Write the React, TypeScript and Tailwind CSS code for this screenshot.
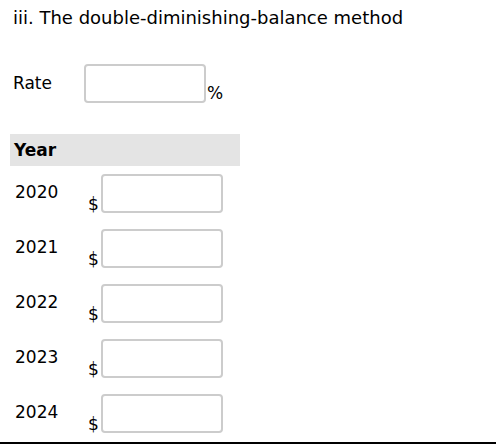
const years = [2020, 2021, 2022, 2023, 2024]

function AmountBox() {
  return (
    <input
      type="text"
      className="w-[122px] h-[39px] border-2 border-[#cccccc] rounded-[4px] bg-white outline-none"
    />
  )
}

export default function App() {
  return (
    <div className="w-[496px] h-[444px] bg-white text-black font-['DejaVu_Sans',Verdana,sans-serif] overflow-hidden flex flex-col">
      <div className="pl-[13px] pt-[8px] text-[18px] leading-[20px]">
        iii. The double-diminishing-balance method
      </div>

      {/* rate */}
      <div className="flex items-center mt-[36px] h-[39px]">
        <span className="pl-[13px] w-[84px] text-[17px] leading-[20px] mt-[-2px]">Rate</span>
        <div className="flex items-end">
          <AmountBox />
          <span className="text-[17px] leading-[17px] ml-[1px] mb-[1px]">%</span>
        </div>
      </div>

      {/* depreciation table */}
      <div className="ml-[10px] mt-[31px] w-[230px] h-[32px] bg-[#e4e4e4] flex items-center pl-[4px]">
        <span className="font-bold text-[17px] leading-[20px]">Year</span>
      </div>

      <div className="flex flex-col mt-[8px] gap-[16px]">
        {years.map(y => (
          <div key={y} className="flex items-center h-[39px]">
            <span className="pl-[15px] w-[88px] text-[17px] leading-[20px] mt-[-4px]">{y}</span>
            <div className="flex items-end">
              <span className="text-[17px] leading-[17px] w-[13px] mb-[0px]">$</span>
              <AmountBox />
            </div>
          </div>
        ))}
      </div>

      <div className="mt-auto h-[2px] bg-black" />
    </div>
  )
}
